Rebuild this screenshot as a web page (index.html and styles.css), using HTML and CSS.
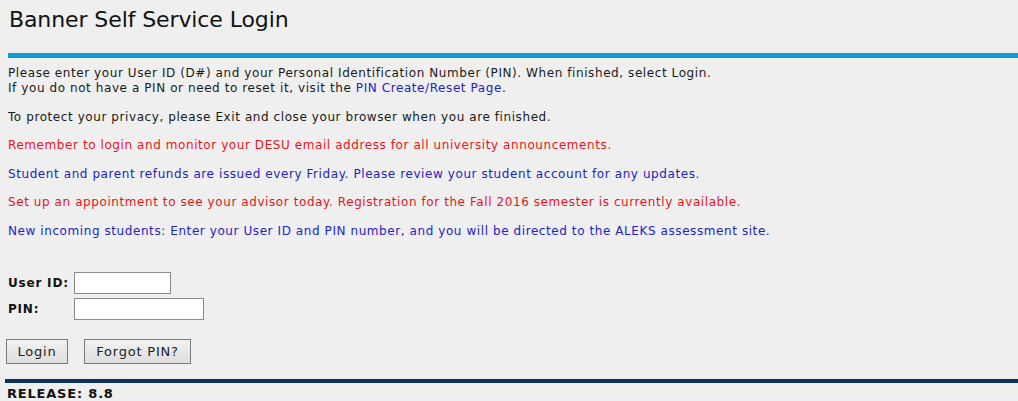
FILE: index.html
```html
<!DOCTYPE html>
<html>
<head>
<meta charset="utf-8">
<title>Banner Self Service Login</title>
<link rel="stylesheet" href="styles.css">
</head>
<body>
<div class="header">
  <h1 class="title">Banner Self Service Login</h1>
</div>
<div class="topbar"></div>
<div class="content">
  <p class="info">Please enter your User ID (D#) and your Personal Identification Number (PIN). When finished, select Login.<br>If you do not have a PIN or need to reset it, visit the <a class="link" href="#">PIN Create/Reset Page</a>.</p>
  <p class="info">To protect your privacy, please Exit and close your browser when you are finished.</p>
  <p class="info red">Remember to login and monitor your DESU email address for all university announcements.</p>
  <p class="info blue">Student and parent refunds are issued every Friday. Please review your student account for any updates.</p>
  <p class="info red">Set up an appointment to see your advisor today. Registration for the Fall 2016 semester is currently available.</p>
  <p class="info blue">New incoming students: Enter your User ID and PIN number, and you will be directed to the ALEKS assessment site.</p>
  <form class="login-form">
    <div class="field-row">
      <label class="field-label" for="sid">User ID:</label>
      <input class="field-input short" id="sid" type="text">
    </div>
    <div class="field-row">
      <label class="field-label" for="pin">PIN:</label>
      <input class="field-input long" id="pin" type="password">
    </div>
    <div class="button-row">
      <button class="btn btn-login" type="button">Login</button>
      <button class="btn btn-forgot" type="button">Forgot PIN?</button>
    </div>
  </form>
</div>
<div class="footer-line"></div>
<div class="release">RELEASE: 8.8</div>
</body>
</html>
```

FILE: styles.css
```css
html, body {
  margin: 0;
  padding: 0;
}
body {
  background: #efefef;
  font-family: "DejaVu Sans", Verdana, sans-serif;
  font-size: 12px;
  letter-spacing: 0.58px;
  color: #1a1a1a;
  width: 1018px;
  height: 401px;
  overflow: hidden;
}
.header {
  padding: 6px 0 0 9px;
  height: 46px;
  box-sizing: border-box;
}
.title {
  margin: 0;
  font-size: 22px;
  font-weight: normal;
  line-height: 28px;
  letter-spacing: -0.1px;
  color: #111;
}
.topbar {
  margin-left: 8px;
  height: 5px;
  background: #0e9bd6;
  margin-top: 7px;
}
.content {
  padding: 8px 0 0 8px;
}
.info {
  margin: 0 0 13.5px 0;
  line-height: 15px;
}
.red {
  color: #e8151b;
}
.blue {
  color: #2323c8;
}
.link {
  color: #2323c8;
  text-decoration: none;
}
.login-form {
  padding-top: 19.5px;
}
.field-row {
  display: flex;
  align-items: center;
  height: 22px;
  margin-bottom: 4px;
}
.field-label {
  width: 66px;
  font-weight: bold;
  letter-spacing: 0.8px;
  color: #111;
}
.field-input {
  height: 22px;
  box-sizing: border-box;
  border: 1px solid #8a8a8a;
  background: #fff;
  padding: 0 2px;
  margin: 0;
  font-family: inherit;
  font-size: 12px;
}
.short {
  width: 97px;
}
.long {
  width: 130px;
}
.button-row {
  display: flex;
  gap: 16px;
  margin: 19px 0 0 -2px;
}
.btn {
  height: 25px;
  box-sizing: border-box;
  border: 1px solid #7a7a7a;
  border-radius: 0;
  background: linear-gradient(#f2f2f2, #dddddd);
  font-family: inherit;
  font-size: 13px;
  letter-spacing: 0.8px;
  color: #222;
  padding: 0;
  margin: 0;
}
.btn-login {
  width: 62px;
}
.btn-forgot {
  width: 107px;
}
.footer-line {
  margin: 15px 0 0 5px;
  height: 4px;
  background: #10325e;
}
.release {
  padding: 3px 0 0 7px;
  font-weight: bold;
  font-size: 13px;
  letter-spacing: 0.8px;
  line-height: 15px;
  color: #111;
}
```
